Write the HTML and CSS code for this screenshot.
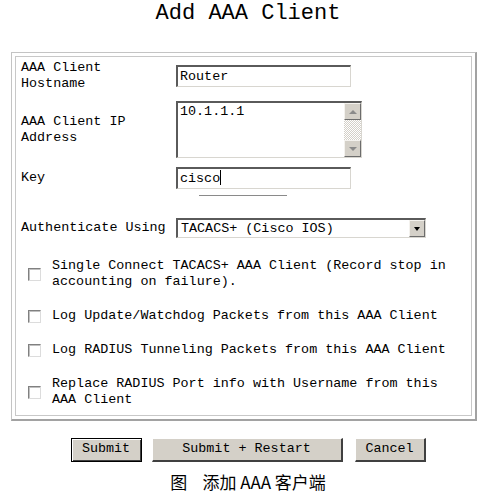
FILE: index.html
```html
<!DOCTYPE html>
<html>
<head>
<meta charset="utf-8">
<link rel="stylesheet" href="styles.css">
</head>
<body>
<h1 class="title">Add AAA Client</h1>
<div class="frame">
  <div class="panel">
    <div class="row row-host">
      <div class="label">AAA Client<br>Hostname</div>
      <div class="textbox">Router</div>
    </div>
    <div class="row row-ip">
      <div class="label">AAA Client IP<br>Address</div>
      <div class="textarea">
        <div class="ta-text">10.1.1.1</div>
        <div class="scrollbar">
          <div class="sb-btn"><span class="arrow up"></span></div>
          <div class="sb-track"></div>
          <div class="sb-btn"><span class="arrow down"></span></div>
        </div>
      </div>
    </div>
    <div class="row row-key">
      <div class="label">Key</div>
      <div class="textbox">cisco<span class="caret"></span></div>
    </div>
    <div class="rule"></div>
    <div class="row row-auth">
      <div class="label">Authenticate Using</div>
      <div class="select">
        <div class="select-text">TACACS+ (Cisco IOS)</div>
        <div class="select-btn"><span class="arrow down dark"></span></div>
      </div>
    </div>
    <div class="checks">
      <div class="check"><span class="box"></span><span class="check-text">Single Connect TACACS+ AAA Client (Record stop in accounting on failure).</span></div>
      <div class="check"><span class="box"></span><span class="check-text">Log Update/Watchdog Packets from this AAA Client</span></div>
      <div class="check"><span class="box"></span><span class="check-text">Log RADIUS Tunneling Packets from this AAA Client</span></div>
      <div class="check"><span class="box"></span><span class="check-text">Replace RADIUS Port info with Username from this AAA Client</span></div>
    </div>
  </div>
</div>
<div class="buttons">
  <div class="btn btn-default">Submit</div>
  <div class="btn btn-wide">Submit + Restart</div>
  <div class="btn">Cancel</div>
</div>
<div class="caption">图&nbsp;&nbsp;&nbsp;&nbsp;添加 AAA 客户端</div>
</body>
</html>
```
FILE: styles.css
```css
html, body {
  margin: 0;
  padding: 0;
  background: #ffffff;
}
body {
  font-family: "Liberation Mono", "DejaVu Sans Mono", monospace;
  font-size: 13.4px;
  line-height: 16px;
  color: #000;
  width: 496px;
}
.title {
  margin: 0;
  height: 28px;
  font-size: 22px;
  line-height: 28px;
  font-weight: normal;
  text-align: center;
  padding-left: 0;
}
.frame {
  box-sizing: border-box;
  margin: 24px 0 0 11px;
  width: 466px;
  height: 369px;
  border-style: solid;
  border-width: 1px 2px 2px 1px;
  border-color: #c4c4c4 #a2a2a2 #a2a2a2 #c4c4c4;
  padding: 3px;
}
.panel {
  box-sizing: border-box;
  height: 100%;
  border: 1px solid #c8c8c8;
  padding: 3px 0 0 5px;
}
.row {
  display: grid;
  grid-template-columns: 155px auto;
  align-items: center;
}
.row-ip { margin-top: 9px; }
.row-key { margin-top: 9px; }
.row-auth { margin-top: 22px; }
.label { white-space: nowrap; }
.textbox {
  box-sizing: border-box;
  width: 175px;
  height: 22px;
  border-style: solid;
  border-width: 2px 1px 1px 2px;
  border-color: #5a5a5a #d8d6d0 #d8d6d0 #5a5a5a;
  padding: 1px 2px;
  line-height: 17px;
  background: #fff;
}
.caret {
  display: inline-block;
  width: 1px;
  height: 15px;
  background: #000;
  vertical-align: -3px;
}
.textarea {
  box-sizing: border-box;
  width: 186px;
  height: 57px;
  border-style: solid;
  border-width: 2px 1px 1px 2px;
  border-color: #5a5a5a #d8d6d0 #d8d6d0 #5a5a5a;
  display: flex;
  background: #fff;
}
.ta-text {
  flex: 1;
  padding: 1px 2px;
}
.scrollbar {
  width: 17px;
  display: flex;
  flex-direction: column;
}
.sb-btn {
  box-sizing: border-box;
  height: 17px;
  background: #d4d0c8;
  border-style: solid;
  border-width: 1px;
  border-color: #f4f2ee #6c6c6c #6c6c6c #f4f2ee;
  display: flex;
  align-items: center;
  justify-content: center;
}
.sb-track {
  flex: 1;
  background: repeating-conic-gradient(#d4d0c8 0 25%, #ffffff 0 50%) 0 0 / 2px 2px;
}
.arrow {
  width: 0;
  height: 0;
  border-left: 4px solid transparent;
  border-right: 4px solid transparent;
}
.arrow.up { border-bottom: 4px solid #8a8a8a; }
.arrow.down { border-top: 4px solid #8a8a8a; }
.arrow.down.dark { border-top-color: #000; border-left-width: 3.5px; border-right-width: 3.5px; }
.rule {
  width: 88px;
  margin: 6px auto 0;
  border-top: 1px solid #8a8a8a;
  position: relative;
  left: -3px;
}
.select {
  box-sizing: border-box;
  width: 250px;
  height: 20px;
  border-style: solid;
  border-width: 2px 1px 1px 2px;
  border-color: #5a5a5a #d8d6d0 #d8d6d0 #5a5a5a;
  display: flex;
  background: #fff;
}
.select-text {
  flex: 1;
  padding: 0 3px;
  line-height: 17px;
}
.select-btn {
  box-sizing: border-box;
  width: 16px;
  background: #d4d0c8;
  border-style: solid;
  border-width: 1px;
  border-color: #f4f2ee #6c6c6c #6c6c6c #f4f2ee;
  display: flex;
  align-items: center;
  justify-content: center;
}
.checks {
  display: flex;
  flex-direction: column;
  gap: 18px;
  margin-top: 20px;
  padding-left: 7px;
}
.check {
  display: flex;
  align-items: center;
}
.box {
  box-sizing: border-box;
  flex: none;
  width: 13px;
  height: 13px;
  border-style: solid;
  border-width: 1px;
  border-color: #808080 #dcdcdc #dcdcdc #808080;
  box-shadow: inset 1px 1px 0 #c0c0c0;
  background: #fff;
  margin-right: 11px;
}
.check-text {
  width: 400px;
}
.buttons {
  display: flex;
  justify-content: center;
  gap: 10px;
  margin-top: 17px;
  padding-left: 0;
}
.btn {
  box-sizing: border-box;
  height: 24px;
  width: 71px;
  background: #d4d0c8;
  border-style: solid;
  border-width: 1px 2px 2px 1px;
  border-color: #ffffff #404040 #404040 #ffffff;
  text-align: center;
  line-height: 20px;
}
.btn-default {
  border: 1px solid #000;
  box-shadow: inset 1px 1px 0 #ffffff, inset -1px -1px 0 #404040;
}
.btn-wide {
  width: 191px;
  margin-right: 2px;
}
.caption {
  text-align: center;
  font-family: "Noto Sans CJK SC", sans-serif;
  font-size: 17px;
  line-height: 22px;
  margin-top: 9px;
}
```
